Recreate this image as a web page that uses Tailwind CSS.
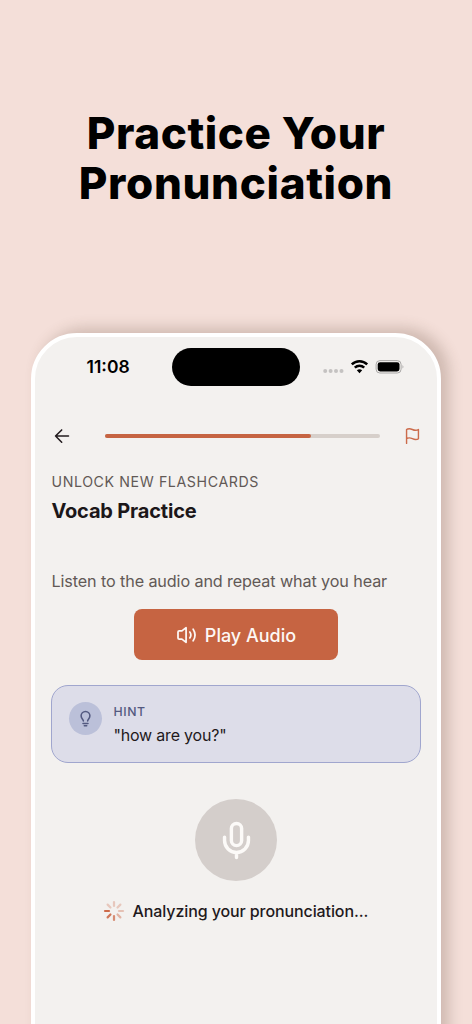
<!DOCTYPE html>
<html lang="en">
<head>
<meta charset="utf-8">
<meta name="viewport" content="width=device-width, initial-scale=1">
<title>Practice Your Pronunciation</title>
<script src="https://cdn.jsdelivr.net/npm/@tailwindcss/browser@4"></script>
</head>
<body class="bg-[#f4dfd9] font-['Inter',sans-serif]">
<main class="w-[472px] h-[1024px] overflow-hidden bg-[#f4dfd9] flex flex-col">
  <h1 class="h-[332.5px] shrink-0 pt-[108px] text-center text-[44px] leading-[50px] font-extrabold text-black whitespace-nowrap">
    <span class="block tracking-[0.55px]">Practice Your</span>
    <span class="block tracking-[0.65px]">Pronunciation</span>
  </h1>
  <section class="ml-[31px] w-[410px] h-[760px] shrink-0 rounded-t-[46px] border-4 border-white bg-[#f3f1ef] shadow-[8px_-5px_14px_rgba(90,65,50,0.24)] flex flex-col px-[16px]">
    <div class="h-[61px] flex items-center pl-[35.5px] shrink-0">
      <div class="w-[85px] text-[17.5px] leading-none font-semibold text-black tracking-[0px]">11:08</div>
      <div class="w-[128px] h-[38px] rounded-full bg-black shrink-0"></div>
      <svg class="ml-[23px] shrink-0" width="82" height="20" viewBox="0 0 82 20">
        <g fill="#c4c2c1"><circle cx="2.2" cy="14" r="2"/><circle cx="7.6" cy="14" r="2"/><circle cx="13" cy="14" r="2"/><circle cx="18.5" cy="14" r="2"/></g>
        <g fill="none" stroke="#000" stroke-width="2.5"><path d="M28.8 7.3A11 11 0 0 1 44.2 7.3"/><path d="M31.8 10.6A6.8 6.8 0 0 1 41.2 10.6"/></g>
        <path d="M33.8 13.2Q36.5 11.2 39.2 13.2L36.5 16.2Z"/>
        <rect x="53.1" y="3.6" width="25" height="12.4" rx="3.8" fill="none" stroke="#aaa8a7"/>
        <rect x="54.7" y="5.2" width="21.8" height="9.2" rx="2.4"/>
        <path d="M79.5 8Q81.4 9.8 79.5 11.6Z" fill="#aaa8a7"/>
      </svg>
    </div>
    <div class="mt-[23.5px] h-[30px] flex items-center shrink-0">
      <svg class="shrink-0" width="21" height="21" viewBox="0 0 24 24" fill="none" stroke="#231c1f" stroke-width="1.8" stroke-linecap="round" stroke-linejoin="round"><path d="M20 11.500H5.200M12.200 18.500l-7-7 7-7"/></svg>
      <div class="ml-[32.5px] w-[275px] h-1 rounded-full bg-[#d6cfca] shrink-0"><div class="h-full rounded-full bg-[#c66442]" style="width:75%"></div></div>
      <svg class="ml-[23px] shrink-0" width="19" height="19" viewBox="0 0 24 24" fill="none" stroke="#cc6b4b" stroke-width="1.8" stroke-linecap="round" stroke-linejoin="round"><path d="M4.500 20.700V3.200s1-1 3.700-1 4.500 2 7.500 2 3.800-1 3.800-1v11.500s-1 1-3.800 1-4.800-2-7.500-2-3.700 1-3.700 1"/></svg>
    </div>
    <div class="mt-[22px] ml-[0.5px] text-[14.2px] leading-[18px] tracking-[0.6px] text-[#625956] whitespace-nowrap">UNLOCK NEW FLASHCARDS</div>
    <h2 class="mt-[8px] ml-[0.5px] text-[20px] leading-[24px] font-bold text-[#1c1719] tracking-[-0.18px] whitespace-nowrap">Vocab Practice</h2>
    <p class="mt-[48px] ml-[0.5px] text-[16.2px] leading-[20px] tracking-[-0.12px] text-[#625956] whitespace-nowrap">Listen to the audio and repeat what you hear</p>
    <button class="mt-[18px] w-[204.5px] h-[51px] self-center rounded-[8px] bg-[#c66442] text-[#fdf8f5] flex items-center justify-center gap-[8px] shrink-0">
      <svg width="21" height="20" viewBox="0 0 24 24" fill="none" stroke="currentColor" stroke-width="2.1" stroke-linecap="round" stroke-linejoin="round"><path d="M11.500 3.200v17.600L6.500 17H3.300a1.500 1.500 0 0 1-1.500-1.500V8.500A1.500 1.500 0 0 1 3.300 7h3.200zM16 8.500q2.500 3.500 0 7M20 5q4.500 7 0 14"/></svg>
      <span class="pt-[2px] text-[18px] leading-none font-medium whitespace-nowrap">Play Audio</span>
    </button>
    <div class="mt-[25px] h-[78px] rounded-[17px] border border-[#a0a6ce] bg-[#dddde9] flex pl-[16.5px] pt-[16px] shrink-0">
      <div class="size-[33px] rounded-full bg-[#bbc0d9] flex items-center justify-center shrink-0">
        <svg width="17" height="17" viewBox="0 0 24 24" fill="none" stroke="#535980" stroke-width="2.2" stroke-linecap="round" stroke-linejoin="round"><path d="M9 15.500c0-2-3.200-3.400-3.200-7.300a6.200 6.200 0 0 1 12.400 0c0 3.900-3.200 5.300-3.200 7.300M8.500 19h7M10.300 22.300h3.400"/></svg>
      </div>
      <div class="ml-[12px]">
        <div class="mt-[2px] text-[12.3px] leading-[16px] font-medium tracking-[0.6px] text-[#535980]">HINT</div>
        <div class="mt-[5px] text-[16px] leading-[20px] tracking-[-0.2px] text-[#1f191c] whitespace-nowrap">"how are you?"</div>
      </div>
    </div>
    <div class="mt-[36px] size-[82px] self-center rounded-full bg-[#d4cecb] flex items-center justify-center shrink-0">
      <svg width="41" height="41" viewBox="0 0 24 24" fill="none" stroke="#fcfaf8" stroke-width="2" stroke-linecap="round" stroke-linejoin="round"><rect x="9" y="2" width="6" height="13" rx="3"/><path d="M19 10v2a7 7 0 0 1-14 0v-2M12 19v3"/></svg>
    </div>
    <div class="mt-[19px] ml-[51.5px] h-[21px] flex items-center shrink-0">
      <svg class="shrink-0" width="22" height="22" viewBox="-11 -11 22 22" stroke="#cd6a49" stroke-width="2.200" stroke-linecap="round">
        <path d="M0-9v4" opacity=".3"/><path d="M0-9v4" transform="rotate(45)" opacity=".3"/><path d="M0-9v4" transform="rotate(90)" opacity=".35"/><path d="M0-9v4" transform="rotate(135)" opacity=".45"/><path d="M0-9v4" transform="rotate(180)" opacity=".75"/><path d="M0-9v4" transform="rotate(225)" opacity=".9"/><path d="M0-9v4" transform="rotate(270)"/><path d="M0-9v4" transform="rotate(315)" opacity=".3"/>
      </svg>
      <span class="ml-[8px] text-[16px] leading-[20px] tracking-[-0.1px] font-medium text-[#1f191c] whitespace-nowrap">Analyzing your pronunciation...</span>
    </div>
  </section>
</main>
</body>
</html>
